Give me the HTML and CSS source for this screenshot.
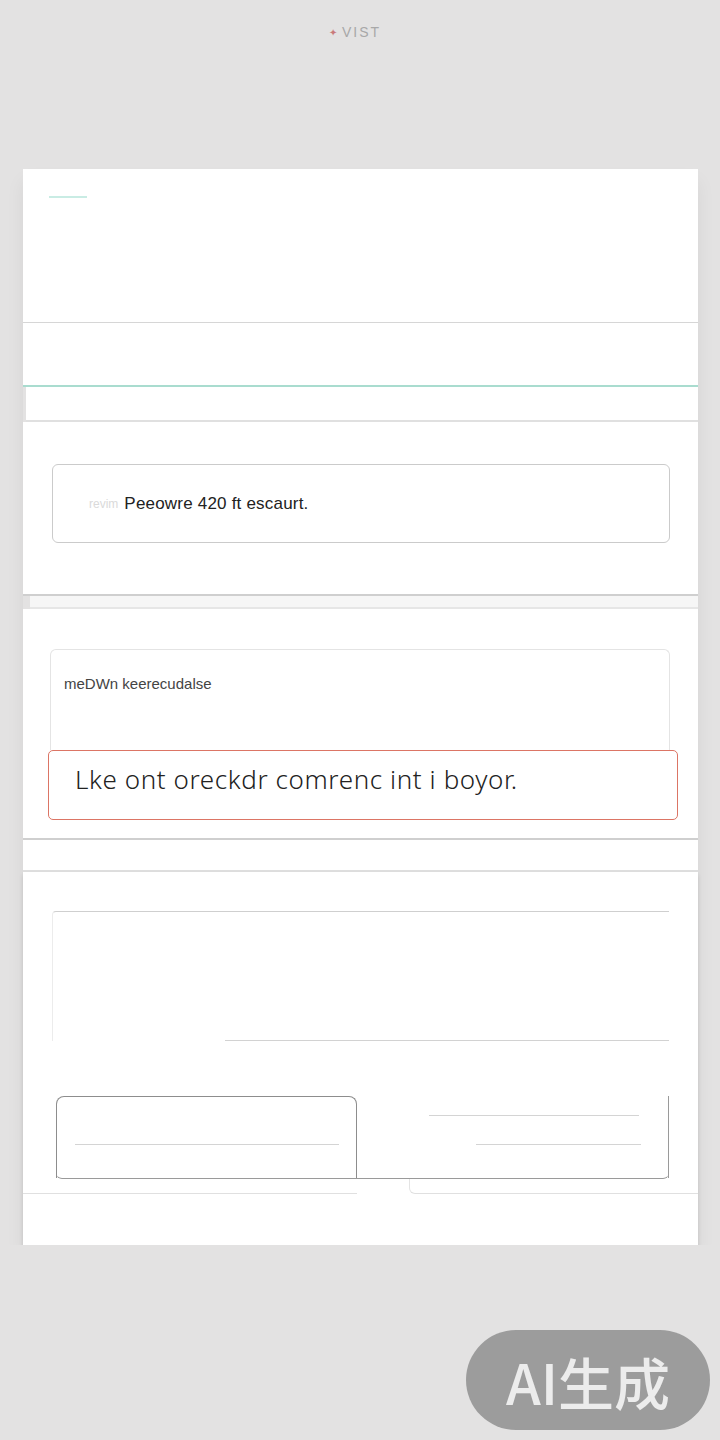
FILE: index.html
```html
<!DOCTYPE html>
<html lang="en">
  <head>
    <meta charset="UTF-8" />
    <title>VIST</title>
    <link rel="stylesheet" href="styles.css">
  </head>
  <body>
    <header class="top">
      <span class="brand-mark">&#10022;</span>
      <span class="brand">VIST</span>
    </header>

    <div class="sheet">
      <section class="intro">
        <span class="tag"></span>
      </section>
      <div class="band"></div>
      <div class="strip"></div>

      <section class="card card-route">
        <div class="field">
          <span class="hint">revim</span>
          <span class="value">Peeowre 420 ft escaurt.</span>
        </div>
      </section>
      <div class="under"></div>

      <section class="card card-note">
        <div class="note-box">
          <p class="note-label">meDWn keerecudalse</p>
        </div>
        <div class="alert">Lke ont oreckdr comrenc int i boyor.</div>
      </section>
      <div class="gap"></div>

      <section class="card card-form">
        <div class="frame">
          <div class="frame-line"></div>
        </div>
        <div class="actions">
          <div class="btn-box">
            <span class="bar"></span>
          </div>
          <div class="side-box">
            <span class="bar bar-a"></span>
            <span class="bar bar-b"></span>
          </div>
        </div>
        <div class="foot">
          <span class="foot-left"></span>
          <span class="foot-right"></span>
        </div>
      </section>
    </div>

    <div class="badge">AI生成</div>
  </body>
</html>
```

FILE: styles.css
```css
body {
  margin: 0;
  background: #e3e2e2;
  font-family: "Liberation Sans", "Noto Sans CJK SC", sans-serif;
  color: #333;
}
.top {
  height: 64px;
  display: flex;
  align-items: center;
  justify-content: center;
  gap: 5px;
  padding-right: 10px;
}
.brand-mark {
  color: #c97a7a;
  font-size: 10px;
}
.brand {
  color: #a8a8a8;
  font-size: 14px;
  letter-spacing: 2px;
}
.sheet {
  width: 675px;
  margin: 105px 0 0 23px;
  box-shadow: 0 12px 18px rgba(0, 0, 0, 0.06);
}
.intro {
  height: 153px;
  background: #fff;
  box-sizing: border-box;
  padding: 27px 0 0 26px;
}
.tag {
  display: block;
  width: 38px;
  height: 2px;
  background: #c9ece4;
}
.band {
  height: 62px;
  background: #fff;
  border-top: 1px solid #d6d6d6;
  border-bottom: 2px solid #a9dccf;
}
.strip {
  height: 33px;
  margin-left: 3px;
  background: #fff;
  border-bottom: 2px solid #e0e0e0;
}
.card {
  background: #fff;
  box-sizing: border-box;
  border-bottom: 2px solid #cfcfcf;
}
.card-route {
  height: 174px;
  padding: 42px 28px 0 29px;
}
.field {
  height: 79px;
  border: 1px solid #cbcbcb;
  border-radius: 6px;
  box-sizing: border-box;
  display: flex;
  align-items: center;
  padding-left: 36px;
  gap: 6px;
  font-size: 17px;
  letter-spacing: 0.2px;
}
.hint {
  color: #dadada;
  font-size: 12px;
  letter-spacing: 0;
}
.value {
  color: #222;
}
.under {
  height: 11px;
  margin-left: 7px;
  background: #f6f6f6;
  border-bottom: 2px solid #e6e6e6;
}
.card-note {
  height: 231px;
  padding: 40px 20px 0 27px;
}
.note-box {
  height: 101px;
  margin-right: 8px;
  border: 1px solid #e4e4e4;
  border-bottom: none;
  border-radius: 6px 6px 0 0;
  box-sizing: border-box;
  padding: 25px 0 0 13px;
}
.note-label {
  margin: 0;
  font-size: 15px;
  letter-spacing: 0;
  color: #444;
}
.alert {
  height: 70px;
  margin-left: -2px;
  border: 1.5px solid #dc7565;
  border-radius: 5px;
  box-sizing: border-box;
  padding: 10px 0 0 26px;
  font-family: "Noto Sans", sans-serif;
  font-weight: 300;
  font-size: 26px;
  letter-spacing: 0.6px;
  color: #222;
}
.gap {
  height: 30px;
  background: #fff;
  border-bottom: 2px solid #dedede;
}
.card-form {
  height: 373px;
  padding: 39px 29px 0 29px;
  border-bottom: none;
  box-shadow: 0 3px 4px rgba(0, 0, 0, 0.12);
}
.frame {
  height: 129px;
  border-top: 1px solid #cfcfcf;
  border-left: 1px solid #ececec;
  border-radius: 4px 0 0 0;
  display: flex;
  align-items: flex-end;
  justify-content: flex-end;
}
.frame-line {
  width: 444px;
  height: 1px;
  background: #d2d2d2;
}
.actions {
  margin-top: 55px;
  height: 82px;
  display: flex;
  justify-content: space-between;
  border-bottom: 1px solid #9a9a9a;
  border-radius: 0 0 6px 6px;
  margin-left: 4px;
}
.btn-box {
  width: 301px;
  box-sizing: border-box;
  border: 1px solid #8d8d8d;
  border-bottom: none;
  border-radius: 8px 8px 0 0;
  display: flex;
  align-items: flex-end;
  justify-content: center;
  padding-bottom: 33px;
}
.btn-box .bar {
  width: 264px;
}
.bar {
  display: block;
  height: 1px;
  background: #d4d4d4;
}
.side-box {
  width: 258px;
  box-sizing: border-box;
  border-right: 1px solid #9a9a9a;
  display: flex;
  flex-direction: column;
  align-items: flex-end;
  padding: 19px 27px 0 0;
  gap: 28px;
}
.bar-a {
  width: 210px;
  margin-right: 2px;
}
.bar-b {
  width: 165px;
}
.foot {
  display: flex;
  justify-content: space-between;
  margin: 14px -29px 0;
}
.foot-left {
  width: 334px;
  height: 1px;
  background: #e0e0e0;
}
.foot-right {
  width: 288px;
  height: 14px;
  margin-top: -14px;
  border-left: 1px solid #e4e4e4;
  border-bottom: 1px solid #e0e0e0;
  border-radius: 0 0 0 6px;
}
.badge {
  position: fixed;
  left: 466px;
  top: 1330px;
  width: 244px;
  height: 100px;
  border-radius: 50px;
  background: #9c9c9c;
  color: #ececec;
  font-size: 56px;
  font-weight: 500;
  display: flex;
  align-items: center;
  justify-content: center;
  font-family: "Noto Sans CJK SC", sans-serif;
}
```
